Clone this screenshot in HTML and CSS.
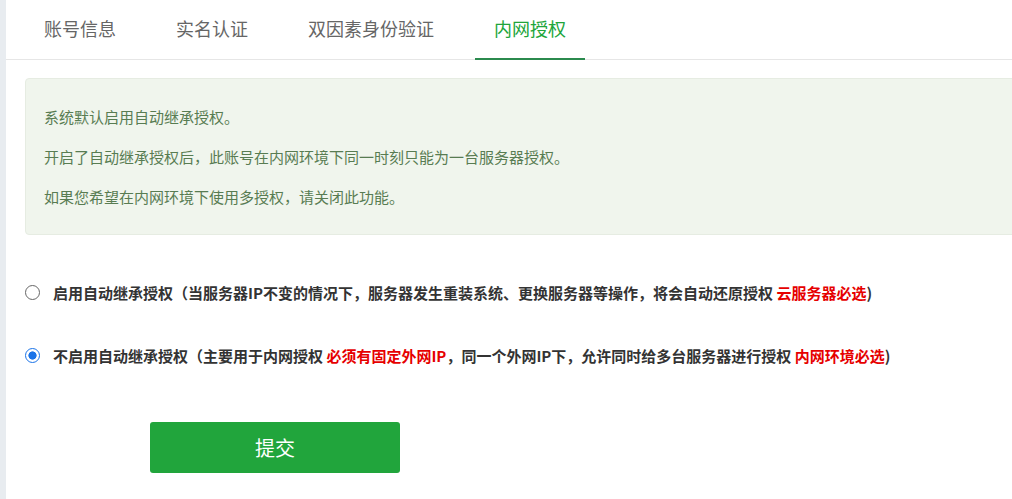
FILE: index.html
```html
<!DOCTYPE html>
<html lang="zh-CN">
<head>
<meta charset="utf-8">
<title>内网授权</title>
<link rel="stylesheet" href="styles.css">
</head>
<body>
<div class="layout">
  <div class="strip"></div>
  <div class="main">
    <div class="tabs">
      <div class="tab">账号信息</div>
      <div class="tab">实名认证</div>
      <div class="tab">双因素身份验证</div>
      <div class="tab active">内网授权</div>
    </div>
    <div class="content">
      <div class="alert">
        <p>系统默认启用自动继承授权。</p>
        <p>开启了自动继承授权后，此账号在内网环境下同一时刻只能为一台服务器授权。</p>
        <p>如果您希望在内网环境下使用多授权，请关闭此功能。</p>
      </div>
      <label class="option first">
        <input type="radio" name="inherit" class="radio">
        <span class="label">启用自动继承授权（当服务器IP不变的情况下，服务器发生重装系统、更换服务器等操作，将会自动还原授权 <span class="red">云服务器必选</span>)</span>
      </label>
      <label class="option second">
        <input type="radio" name="inherit" class="radio" checked>
        <span class="label">不启用自动继承授权（主要用于内网授权 <span class="red">必须有固定外网IP</span>，同一个外网IP下，允许同时给多台服务器进行授权 <span class="red">内网环境必选</span>)</span>
      </label>
      <button class="submit" type="button">提交</button>
    </div>
  </div>
</div>
</body>
</html>
```

FILE: styles.css
```css
html, body {
  margin: 0;
  padding: 0;
  background: #ffffff;
  font-family: "Noto Sans CJK SC", "Noto Sans", "Liberation Sans", sans-serif;
  overflow: hidden;
}

.layout {
  display: flex;
  min-height: 499px;
}

.strip {
  width: 6px;
  flex: 0 0 6px;
  background: #e8ecf0;
}

.main {
  flex: 1;
  min-width: 0;
  background: #ffffff;
}

.tabs {
  display: flex;
  height: 60px;
  box-sizing: border-box;
  border-bottom: 1px solid #e6e6e6;
  padding-left: 19px;
}

.tab {
  padding: 0 19px;
  margin-right: 22px;
  height: 59px;
  line-height: 57px;
  font-size: 18px;
  color: #666666;
  box-sizing: border-box;
  white-space: nowrap;
}

.tab.active {
  color: #20a53a;
  height: 60px;
  border-bottom: 2px solid #2b8a4e;
  margin-bottom: -1px;
}

.content {
  padding-left: 19px;
}

.alert {
  margin-top: 18px;
  margin-right: -20px;
  background: #f0f5ed;
  border: 1px solid #e6ece2;
  border-radius: 4px;
  padding: 18px 18px 17px;
  font-size: 15px;
  line-height: 40px;
  color: #587c52;
}

.alert p {
  margin: 0;
}

.option {
  display: flex;
  align-items: center;
  height: 30px;
  font-size: 15px;
  font-weight: bold;
  color: #333333;
  white-space: nowrap;
}

.option.first {
  margin-top: 42px;
}

.option.second {
  margin-top: 33px;
}

.radio {
  -webkit-appearance: none;
  appearance: none;
  box-sizing: border-box;
  margin: 1px 13px 0 0;
  width: 15px;
  height: 15px;
  flex: 0 0 15px;
  border: 1.5px solid #666666;
  border-radius: 50%;
  background: #ffffff;
}

.radio:checked {
  border-color: #1a73e8;
  background: radial-gradient(circle, #1a73e8 0 3.8px, #ffffff 4.4px);
}

.red {
  color: #e60000;
}

.submit {
  display: block;
  margin: 52px 0 0 125px;
  width: 250px;
  height: 51px;
  border: none;
  border-radius: 3px;
  background: #21a53c;
  color: #ffffff;
  font-family: inherit;
  font-size: 20px;
}
```
